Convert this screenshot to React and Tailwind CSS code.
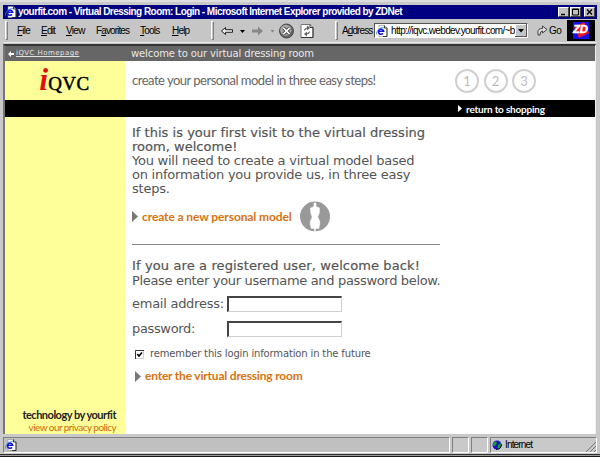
import React from "react";

function PageIcon() {
  return (
    <svg width="12" height="12" viewBox="0 0 12 12" className="shrink-0">
      <path d="M3 .5h5.5l2.5 2.500v8.500H3z" fill="#fff" stroke="#8a8a8a" strokeWidth=".6" />
      <path d="M8.500 .5v2.500H11v8.500H7" fill="none" stroke="#222" strokeWidth=".9" />
      <path d="M2.400 6.200h5.200a2.600 2.600 0 1 0-.6 2.200" fill="none" stroke="#1515d8" strokeWidth="1.600" />
      <path d="M.5 9.500C0 6 4 2.500 8 2.200" fill="none" stroke="#2a8bbd" strokeWidth=".8" />
    </svg>
  );
}

function Menu({ first = "", hot, rest, className }) {
  return (
    <span className={"inline-block whitespace-nowrap " + className}>
      {first}
      <span className="underline underline-offset-1">{hot}</span>
      {rest}
    </span>
  );
}

function Grip() {
  return <div className="h-[19px] w-[3px] shrink-0 border-y border-l border-r border-[#fff] border-r-[#808080] border-b-[#808080]" />;
}

function Step({ n }) {
  return (
    <div className="flex h-6 w-6 items-center justify-center rounded-full border-2 border-[#cfcfcf] font-['Lato',sans-serif] text-[13px] leading-none text-[#bbb]">
      {n}
    </div>
  );
}

function Arrow({ className }) {
  return (
    <svg viewBox="0 0 6 11" preserveAspectRatio="none" className={className}>
      <path d="M0 0L6 5.500L0 11z" fill="currentColor" />
    </svg>
  );
}

function WinButton({ children, className = "" }) {
  return (
    <div className={"h-[10px] w-[11px] shrink-0 border border-white border-r-[#404040] border-b-[#404040] bg-[#c0c0c0] " + className}>
      <svg width="9" height="8" viewBox="0 0 9 8" fill="none" stroke="#000" className="block">
        {children}
      </svg>
    </div>
  );
}

function TitleBar() {
  return (
    <div className="flex h-[14px] items-center bg-[#000080] pl-[2px] pr-[2px] text-white">
      <PageIcon />
      <span className="ml-px grow whitespace-nowrap text-[10px] font-bold leading-[14px] tracking-[-0.54px]">
        yourfit.com - Virtual Dressing Room: Login - Microsoft Internet Explorer provided by ZDNet
      </span>
      <WinButton><path d="M2 6.500h4" strokeWidth="1.500" /></WinButton>
      <WinButton className="ml-px"><path d="M1.500 1h6v6h-6zM1.500 1.500h6" /></WinButton>
      <WinButton className="ml-[3px]"><path d="M2 1.500l5 5M7 1.500l-5 5" strokeWidth="1.400" /></WinButton>
    </div>
  );
}

function ToolBar() {
  return (
    <div className="flex h-[24px] items-center border-b border-[#e8e8e8] bg-[#c6c6c6] pl-[2px] text-[10px] leading-3 text-black">
      <Grip />
      <Menu className="ml-[9px] w-[24px] tracking-[-0.8px]" hot="F" rest="ile" />
      <Menu className="w-[25px] tracking-[-0.8px]" hot="E" rest="dit" />
      <Menu className="w-[30px] tracking-[-0.7px]" hot="V" rest="iew" />
      <Menu className="w-[44px] tracking-[-0.9px]" first="F" hot="a" rest="vorites" />
      <Menu className="w-[32px] tracking-[-0.8px]" hot="T" rest="ools" />
      <Menu className="w-[39px] tracking-[-0.8px]" hot="H" rest="elp" />
      <Grip />
      <svg width="102" height="20" viewBox="0 0 102 20" className="ml-[3px] shrink-0">
        <path d="M4.500 10l4-3.500v2.200h7v2.600h-7v2.200z" fill="#eee" stroke="#222" />
        <path d="M23 9h5l-2.500 3z" fill="#000" />
        <path d="M46 10l-5-4.500v3h-6v3h6v3z" fill="#888" />
        <path d="M53.500 9h4l-2 2.500z" fill="#888" />
        <circle cx="69.500" cy="10" r="7" fill="#666" stroke="#333" strokeWidth=".8" />
        <circle cx="68.800" cy="9.200" r="5.500" fill="#aaa" />
        <path d="M66.500 7l6 6m0-6l-6 6" stroke="#444" strokeWidth="3.200" />
        <path d="M66.500 7l6 6m0-6l-6 6" stroke="#fff" strokeWidth="1.700" />
        <path d="M84 3.500h9l3 3V16.500H84z" fill="#fff" stroke="#777" />
        <path d="M93 3.500v3h3V16.500H84" fill="none" stroke="#333" />
        <path d="M87.500 9.500q0-2.500 3-2.500m0-1.800v3.500l2-1.700zM92.500 10.500q0 2.500-3 2.500m0 1.800v-3.500l-2 1.700z" fill="#555" stroke="#555" strokeWidth=".8" />
      </svg>
      <div className="ml-[16px] flex items-center"><Grip /></div>
      <span className="ml-[4px] w-[32px] whitespace-nowrap tracking-[-0.9px]">A<span className="underline">d</span>dress</span>
      <div className="flex h-[15px] w-[154px] shrink-0 items-center border border-[#555] border-b-white border-r-white bg-white pl-px">
        <PageIcon />
        <span className="ml-[3px] w-[124px] shrink-0 whitespace-nowrap tracking-[-0.65px]">http://iqvc.webdev.yourfit.com/~b</span>
        <svg width="12" height="13" viewBox="0 0 12 13" className="shrink-0">
          <path d="M0 0h12v13H0z" fill="#555" />
          <path d="M0 0h11v12H0z" fill="#fff" />
          <path d="M1 1h10v11H1z" fill="#c6c6c6" />
          <path d="M3 5h6l-3 3.500z" fill="#000" />
        </svg>
      </div>
      <svg width="11" height="12" viewBox="0 0 11 12" className="ml-[9px] shrink-0">
        <path d="M1 10V6.500Q1 3.500 5.500 3.500V1L10 4.500L5.500 8V6Q3 6 3 10z" fill="#ddd" stroke="#333" strokeWidth=".9" />
      </svg>
      <span className="w-[19px] shrink-0 pl-px tracking-[-0.6px]">Go</span>
      <div className="flex h-[21px] w-[28px] shrink-0 items-center justify-center bg-black">
        <svg width="20" height="18" viewBox="0 0 20 18">
          <path d="M2 0h16v17H2z" fill="#1410e8" />
          <path d="M3 5L13 0L18 11L8 16z" fill="#e81820" />
          <text x="2" y="11" fontFamily="Liberation Sans" fontWeight="bold" fontStyle="italic" fontSize="11" fill="#fff" stroke="#fff" strokeWidth=".4" textLength="15" lengthAdjust="spacingAndGlyphs">ZD</text>
        </svg>
      </div>
    </div>
  );
}

function Mannequin() {
  return (
    <svg width="30" height="31" viewBox="0 0 30 31" className="ml-[6px] shrink-0">
      <circle cx="15" cy="15.500" r="15" fill="#999" />
      <path
        d="M14 2 H16 V5.500 L19.500 7 L19.300 12 L17.800 16 L19.600 20 L19.800 23 L18.800 27.500 H11.200 L10.200 23 L10.400 20 L12.200 16 L10.700 12 L10.500 7 L14 5.500 Z"
        fill="#fff"
        stroke="#fff"
        strokeWidth=".5"
        strokeLinejoin="round"
      />
      <path d="M14.300 27h1.400v4h-1.400z" fill="#fff" />
    </svg>
  );
}

function Field({ label, labelClass, className = "" }) {
  return (
    <div className={"flex h-4 items-center " + className}>
      <span className={"w-[95px] whitespace-nowrap " + labelClass}>{label}</span>
      <div className="h-4 w-[115px] border-l-2 border-t-2 border-b border-r border-[#444] border-b-[#d0d0d0] border-r-[#d0d0d0] bg-white" />
    </div>
  );
}

export default function App() {
  return (
    <div className="flex h-[457px] w-[600px] flex-col overflow-hidden bg-[#c9c9c9] font-['Liberation_Sans',Arial,sans-serif]">
      <div className="h-[5px] shrink-0 border-t-2 border-[#dedede]" />
      <div className="mx-[3px]"><TitleBar /></div>
      <div className="mx-[3px]"><ToolBar /></div>
      <div className="ml-[3px] mr-[4px] mt-px flex h-[390px] shrink-0 flex-col border-l-2 border-t-2 border-r border-[#333] border-l-[#777] border-r-[#eee] bg-white">
        <div className="flex h-[15px] shrink-0 items-center bg-[#666] font-['DejaVu_Sans',Verdana,sans-serif]">
          <svg width="6" height="6" viewBox="0 0 6 6" className="ml-[3px]"><path d="M0 3l3-3v2h3v2H3v2z" fill="#fff" /></svg>
          <span className="ml-[2px] w-[115px] whitespace-nowrap text-[7px] leading-[9px] tracking-[0.45px] text-[#e2e2e2] underline">iQVC Homepage</span>
          <span className="whitespace-nowrap text-[10px] leading-[14px] tracking-[-0.12px] text-[#e8e8e8]">welcome to our virtual dressing room</span>
        </div>
        <div className="flex h-[39px] shrink-0">
          <div className="flex w-[120px] justify-center bg-[#ffff99] pr-[1px] font-['Liberation_Serif',serif]">
            <span className="mt-[2px] text-[32px] font-bold italic leading-[32px] text-[#e01010]">i</span>
            <span className="mt-[13px] text-[19px] leading-[20px] tracking-[0.5px] text-black [-webkit-text-stroke:0.5px_black]">QVC</span>
          </div>
          <span className="ml-[7px] mt-[9px] w-[323px] whitespace-nowrap font-['Lato',sans-serif] text-[13px] leading-5 tracking-[-0.5px] text-[#666]">create your personal model in three easy steps!</span>
          <div className="mt-[8px] flex gap-[4.500px]">
            <Step n="1" /><Step n="2" /><Step n="3" />
          </div>
        </div>
        <div className="flex h-[17px] shrink-0 items-center bg-black pl-[453px] text-white">
          <Arrow className="h-[7px] w-1" />
          <span className="ml-[4px] whitespace-nowrap font-['Lato',sans-serif] text-[10px] font-bold leading-4 tracking-[-0.2px]">return to shopping</span>
        </div>
        <div className="flex grow">
          <div className="flex w-[120px] flex-col items-end justify-end bg-[#ffff99] pb-px pr-[9px] font-['Lato',sans-serif]">
            <span className="whitespace-nowrap text-[11px] font-bold leading-3 tracking-[-0.5px] text-[#222]">technology by yourfit</span>
            <span className="whitespace-nowrap text-[10px] leading-3 tracking-[-0.55px] text-[#d06a00]">view our privacy policy</span>
          </div>
          <div className="ml-[7px] w-[308px] whitespace-nowrap pt-[9px] font-['DejaVu_Sans',Verdana,sans-serif] text-[13px] leading-[14px] tracking-[-0.24px] text-[#555]">
            <p className="tracking-[0.02px] [-webkit-text-stroke:0.2px_#555]">If this is your first visit to the virtual dressing<br />room, welcome!</p>
            <p>You will need to create a virtual model based<br />on information you provide us, in three easy<br />steps.</p>
            <div className="mt-[5px] flex h-[31px] items-center">
              <Arrow className="h-[11px] w-[6px] text-[#777]" />
              <span className="ml-[4px] w-[152px] font-['Lato',sans-serif] text-[12px] font-bold tracking-[-0.1px] text-[#d87312]">create a new personal model</span>
              <Mannequin />
            </div>
            <div className="mt-[12px] h-px bg-[#888]" />
            <p className="mt-[14px] tracking-[0.12px] [-webkit-text-stroke:0.2px_#555]">If you are a registered user, welcome back!</p>
            <p className="mt-px tracking-[-0.33px]">Please enter your username and password below.</p>
            <Field label="email address:" labelClass="tracking-[-0.26px]" className="mt-[8px]" />
            <Field label="password:" labelClass="tracking-[-0.35px]" className="mt-[9px]" />
            <div className="mt-[12px] flex h-[10px] items-center pl-[3px]">
              <svg width="9" height="9" viewBox="0 0 9 9" className="shrink-0">
                <path d="M.5 9V.5H9" fill="none" stroke="#333" />
                <path d="M8.500 1v7.500H1" fill="none" stroke="#ccc" />
                <path d="M2.200 4l1.800 2L7 2.500" fill="none" stroke="#000" strokeWidth="1.600" />
              </svg>
              <span className="ml-[6px] text-[10px] leading-[10px] tracking-[-0.15px]">remember this login information in the future</span>
            </div>
            <div className="mt-[9px] flex h-[16px] items-center pl-[3px]">
              <Arrow className="h-[11px] w-[6px] text-[#777]" />
              <span className="ml-[4px] font-['Lato',sans-serif] text-[12px] font-bold tracking-[-0.2px] text-[#d87312]">enter the virtual dressing room</span>
            </div>
          </div>
        </div>
      </div>
      <div className="mx-[3px] mt-[3px] flex h-[16px] shrink-0 items-stretch gap-[2px] text-[10px]">
        <div className="flex w-[447px] items-center border border-[#808080] border-b-white border-r-white bg-[#c0c0c0] pl-px"><PageIcon /></div>
        <div className="w-[17px] border border-[#808080] border-b-white border-r-white" />
        <div className="w-[17px] border border-[#808080] border-b-white border-r-white" />
        <div className="flex grow items-center border border-[#808080] border-b-white border-r-white pl-px">
          <svg width="10" height="10" viewBox="0 0 10 10">
            <circle cx="5" cy="5" r="4.500" fill="#1414c8" />
            <path d="M1 3l3-2 1 2-2 3-2-.5zM6 5l3-2 .3 3L7 9 5.500 8z" fill="#1c9c2c" />
            <path d="M9.300 4Q10 9 4 9.500" fill="none" stroke="#111" />
          </svg>
          <span className="ml-[3px] grow leading-3 tracking-[-0.85px]">Internet</span>
          <svg width="11" height="11" viewBox="0 0 11 11" className="self-end"><path d="M1 11L11 1M5 11l6-6M9 11l2-2" stroke="#777" /></svg>
        </div>
      </div>
      <div className="mt-px h-px bg-[#333]" />
      <div className="h-px bg-[#999]" />
      <div className="grow bg-[#181818]" />
    </div>
  );
}
